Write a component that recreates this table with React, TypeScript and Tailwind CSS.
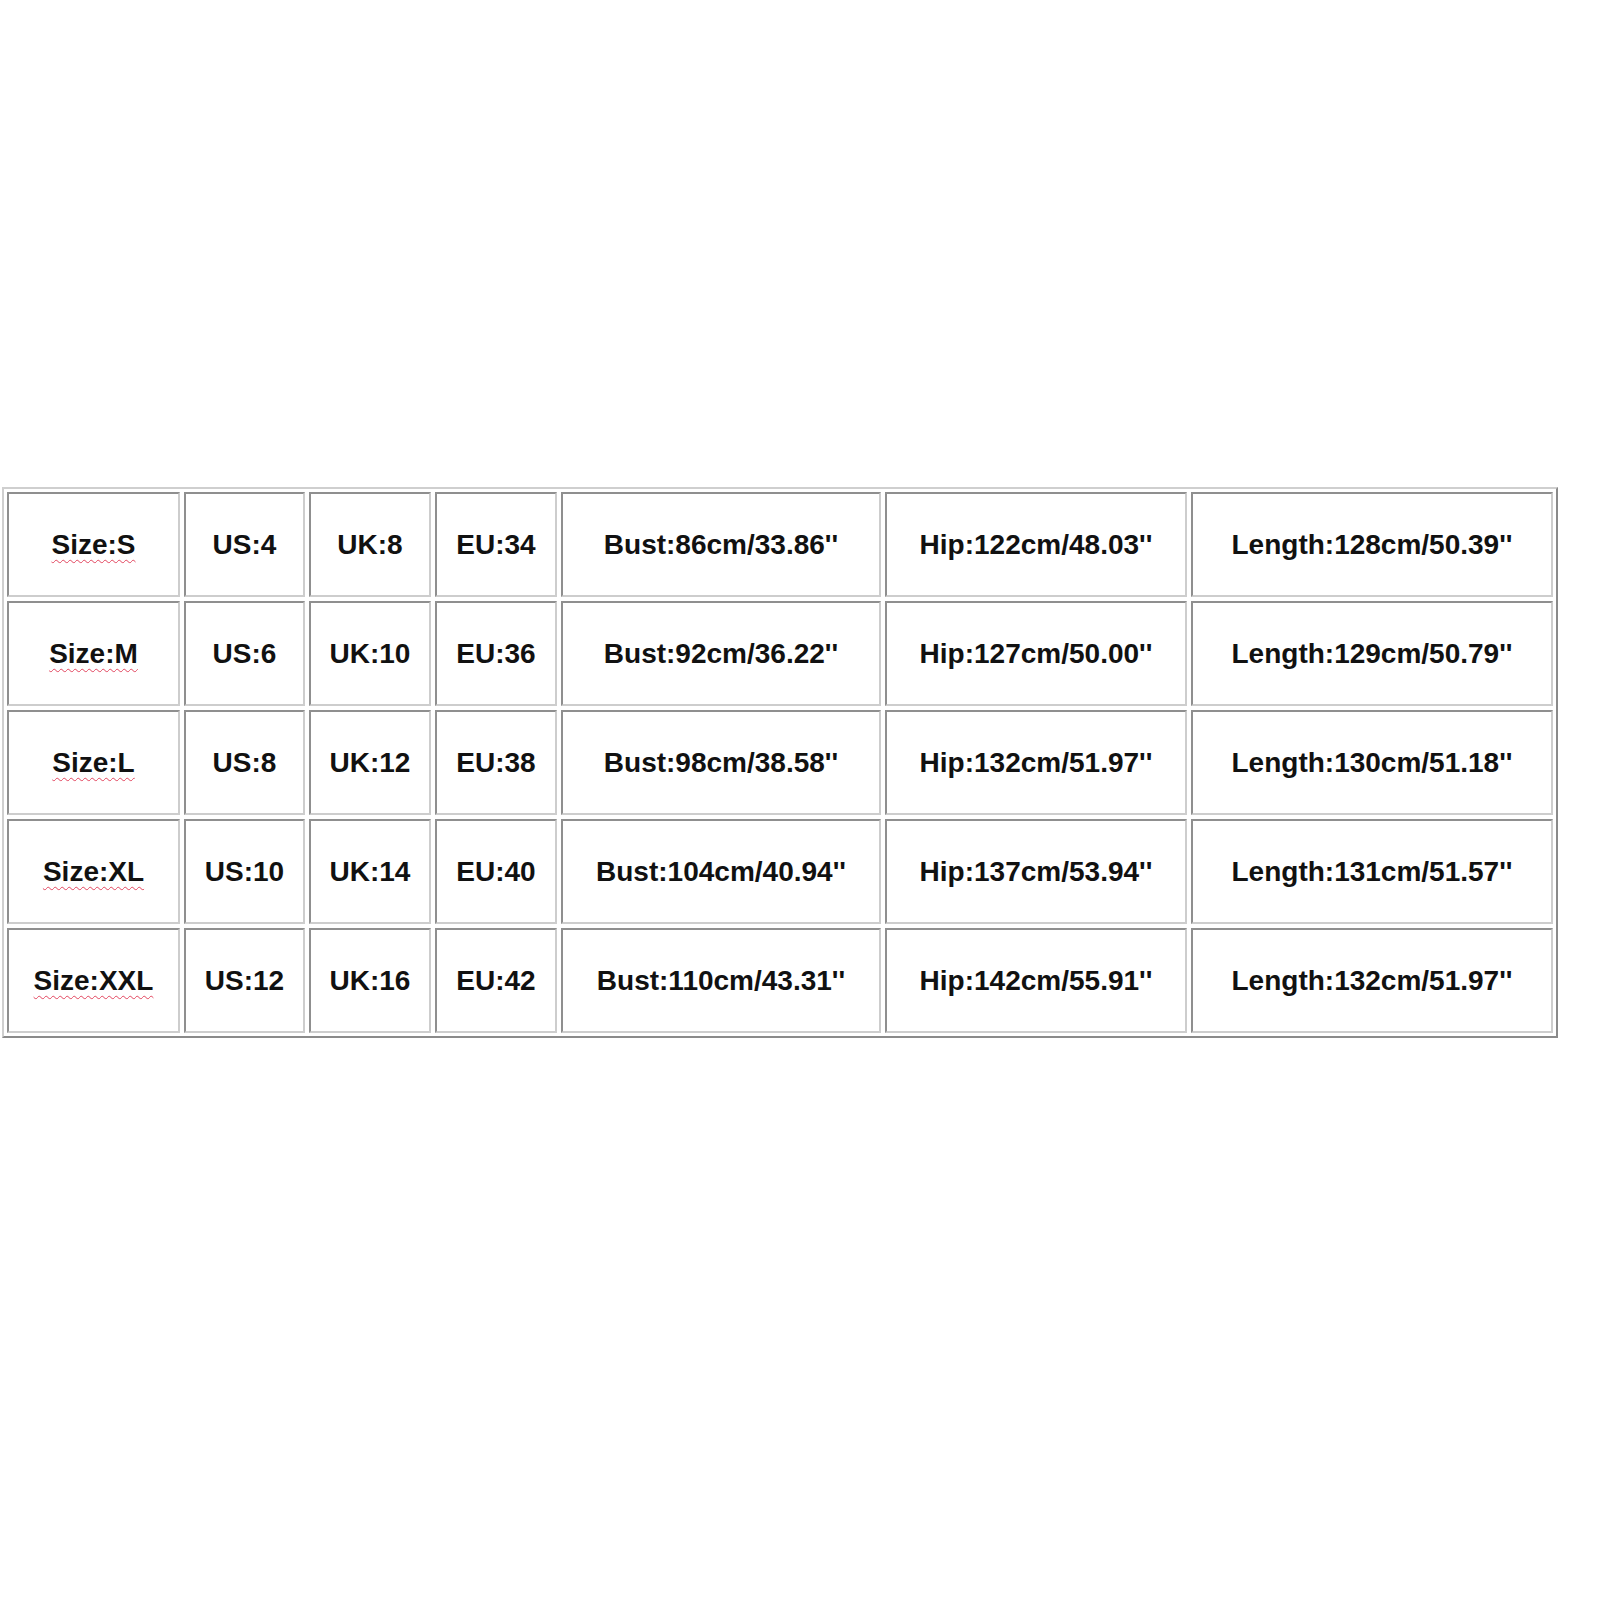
const rows = [
  ["Size:S", "US:4", "UK:8", "EU:34", "Bust:86cm/33.86''", "Hip:122cm/48.03''", "Length:128cm/50.39''"],
  ["Size:M", "US:6", "UK:10", "EU:36", "Bust:92cm/36.22''", "Hip:127cm/50.00''", "Length:129cm/50.79''"],
  ["Size:L", "US:8", "UK:12", "EU:38", "Bust:98cm/38.58''", "Hip:132cm/51.97''", "Length:130cm/51.18''"],
  ["Size:XL", "US:10", "UK:14", "EU:40", "Bust:104cm/40.94''", "Hip:137cm/53.94''", "Length:131cm/51.57''"],
  ["Size:XXL", "US:12", "UK:16", "EU:42", "Bust:110cm/43.31''", "Hip:142cm/55.91''", "Length:132cm/51.97''"],
];

export default function App() {
  return (
    <div className="h-[1600px] w-[1600px] bg-white pl-[2px] pt-[487px] font-['Liberation_Sans',Arial,sans-serif]">
      <div className="w-[1556px] border-2 border-t-[#cfcfcf] border-l-[#cfcfcf] border-b-[#8a8a8a] border-r-[#8a8a8a] p-[3px]">
        <div className="grid grid-cols-[173px_121px_122px_122px_320px_302px_362px] auto-rows-[105px] gap-[4px]">
          {rows.map((row) =>
            row.map((cell, i) => (
              <div
                key={cell}
                className="flex items-center justify-center border-2 border-t-[#8f8f8f] border-l-[#8f8f8f] border-b-[#cdcdcd] border-r-[#cdcdcd] text-[28px] font-bold leading-none text-[#111]"
              >
                {i === 0 ? (
                  <span className="underline decoration-wavy decoration-[#e2455e] decoration-1 underline-offset-[5px]">
                    {cell}
                  </span>
                ) : (
                  <span>{cell}</span>
                )}
              </div>
            ))
          )}
        </div>
      </div>
    </div>
  );
}
